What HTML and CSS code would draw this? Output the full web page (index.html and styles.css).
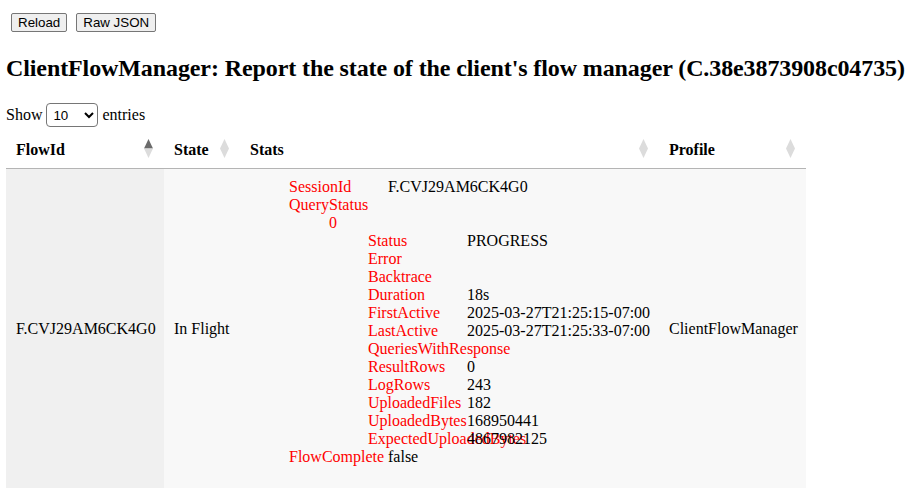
FILE: index.html
```html
<!DOCTYPE html>
<html>
<head>
<meta charset="utf-8">
<title>ClientFlowManager</title>
<link rel="stylesheet" href="styles.css">
</head>
<body>
<div class="toolbar">
  <button class="btn">Reload</button>
  <button class="btn">Raw JSON</button>
</div>
<h2 class="title">ClientFlowManager: Report the state of the client's flow manager (C.38e3873908c04735)</h2>
<div class="length"><label>Show <select class="length-select"><option>10</option><option>25</option><option>50</option></select> entries</label></div>
<table class="flows">
  <thead>
    <tr>
      <th class="c-flow">FlowId<svg class="sort" width="9" height="19" viewBox="0 0 9 19"><polygon points="4.5,0 9,9.5 0,9.5" fill="#6b6b6b"/><polygon points="0,9.5 9,9.5 4.5,19" fill="#dcdcdc"/></svg></th>
      <th class="c-state">State<svg class="sort" width="9" height="19" viewBox="0 0 9 19"><polygon points="4.5,0 9,9.5 4.5,19 0,9.5" fill="#dcdcdc"/></svg></th>
      <th class="c-stats">Stats<svg class="sort" width="9" height="19" viewBox="0 0 9 19"><polygon points="4.5,0 9,9.5 4.5,19 0,9.5" fill="#dcdcdc"/></svg></th>
      <th class="c-profile">Profile<svg class="sort" width="9" height="19" viewBox="0 0 9 19"><polygon points="4.5,0 9,9.5 4.5,19 0,9.5" fill="#dcdcdc"/></svg></th>
    </tr>
  </thead>
  <tbody>
    <tr class="odd">
      <td class="sorted">F.CVJ29AM6CK4G0</td>
      <td>In Flight</td>
      <td>
        <div class="obj stats">
          <div class="k">SessionId</div><div class="v">F.CVJ29AM6CK4G0</div>
          <div class="k full">QueryStatus</div>
          <div class="arr">
            <div class="k">0</div>
            <div class="obj">
              <div class="k">Status</div><div class="v">PROGRESS</div>
              <div class="k">Error</div><div class="v"></div>
              <div class="k">Backtrace</div><div class="v"></div>
              <div class="k">Duration</div><div class="v">18s</div>
              <div class="k">FirstActive</div><div class="v">2025-03-27T21:25:15-07:00</div>
              <div class="k">LastActive</div><div class="v">2025-03-27T21:25:33-07:00</div>
              <div class="k">QueriesWithResponse</div><div class="v"></div>
              <div class="k">ResultRows</div><div class="v">0</div>
              <div class="k">LogRows</div><div class="v">243</div>
              <div class="k">UploadedFiles</div><div class="v">182</div>
              <div class="k">UploadedBytes</div><div class="v">168950441</div>
              <div class="k">ExpectedUploadedBytes</div><div class="v">4867982125</div>
            </div>
          </div>
          <div class="k">FlowComplete</div><div class="v">false</div>
        </div>
      </td>
      <td>ClientFlowManager</td>
    </tr>
  </tbody>
</table>
</body>
</html>
```

FILE: styles.css
```css
html, body {
  margin: 0;
  padding: 0;
  background: #ffffff;
}

body {
  font-family: "Liberation Serif", "Times New Roman", serif;
  font-size: 16px;
  color: #000;
}

.toolbar {
  display: flex;
  gap: 9px;
  padding: 13px 0 0 11px;
}

.btn {
  box-sizing: border-box;
  height: 19px;
  padding: 0 6px;
  font-family: "Liberation Sans", Arial, sans-serif;
  font-size: 13.333px;
  line-height: 15px;
  color: #000;
  background: #efefef;
  border: 1px solid #767676;
  border-radius: 2px;
}

.title {
  margin: 23px 0 0 6px;
  font-size: 24px;
  line-height: 27px;
  font-weight: bold;
  letter-spacing: -0.1px;
  white-space: nowrap;
}

.length {
  margin: 21px 0 0 6px;
  height: 24px;
  line-height: 24px;
}

.length-select {
  box-sizing: border-box;
  width: 52px;
  height: 24px;
  padding: 0 2px;
  vertical-align: middle;
  font-family: "Liberation Sans", Arial, sans-serif;
  font-size: 13.333px;
  background: #fff;
  color: #000;
  border: 1px solid #767676;
  border-radius: 4px;
  position: relative;
  top: -1px;
}

.flows {
  margin: 3px 0 0 6px;
  width: 800px;
  table-layout: fixed;
  border-collapse: separate;
  border-spacing: 0;
  line-height: 18px;
}

.flows th {
  position: relative;
  box-sizing: border-box;
  padding: 11px 18px 9px 10px;
  text-align: left;
  font-weight: bold;
  border-bottom: 1px solid #b4b4b4;
  white-space: nowrap;
}

.c-flow { width: 158px; }
.c-state { width: 76px; }
.c-stats { width: 419px; }
.c-profile { width: 147px; }

.sort {
  position: absolute;
  right: 11px;
  top: 50%;
  margin-top: -10px;
}

.flows td {
  padding: 9px 10px 8px 10px;
  vertical-align: middle;
  white-space: nowrap;
}

.flows tr.odd td {
  background: #f8f8f8;
}

.flows tr.odd td.sorted {
  background: #f0f0f0;
}

.obj {
  display: grid;
  grid-template-columns: 99px auto;
  margin-left: 39px;
}

.stats {
  padding-bottom: 14px;
}

.k {
  color: #ff0000;
  white-space: nowrap;
}

.v {
  color: #000;
  white-space: nowrap;
}

.full {
  grid-column: 1 / -1;
}

.arr {
  grid-column: 1 / -1;
  margin-left: 40px;
}
```
